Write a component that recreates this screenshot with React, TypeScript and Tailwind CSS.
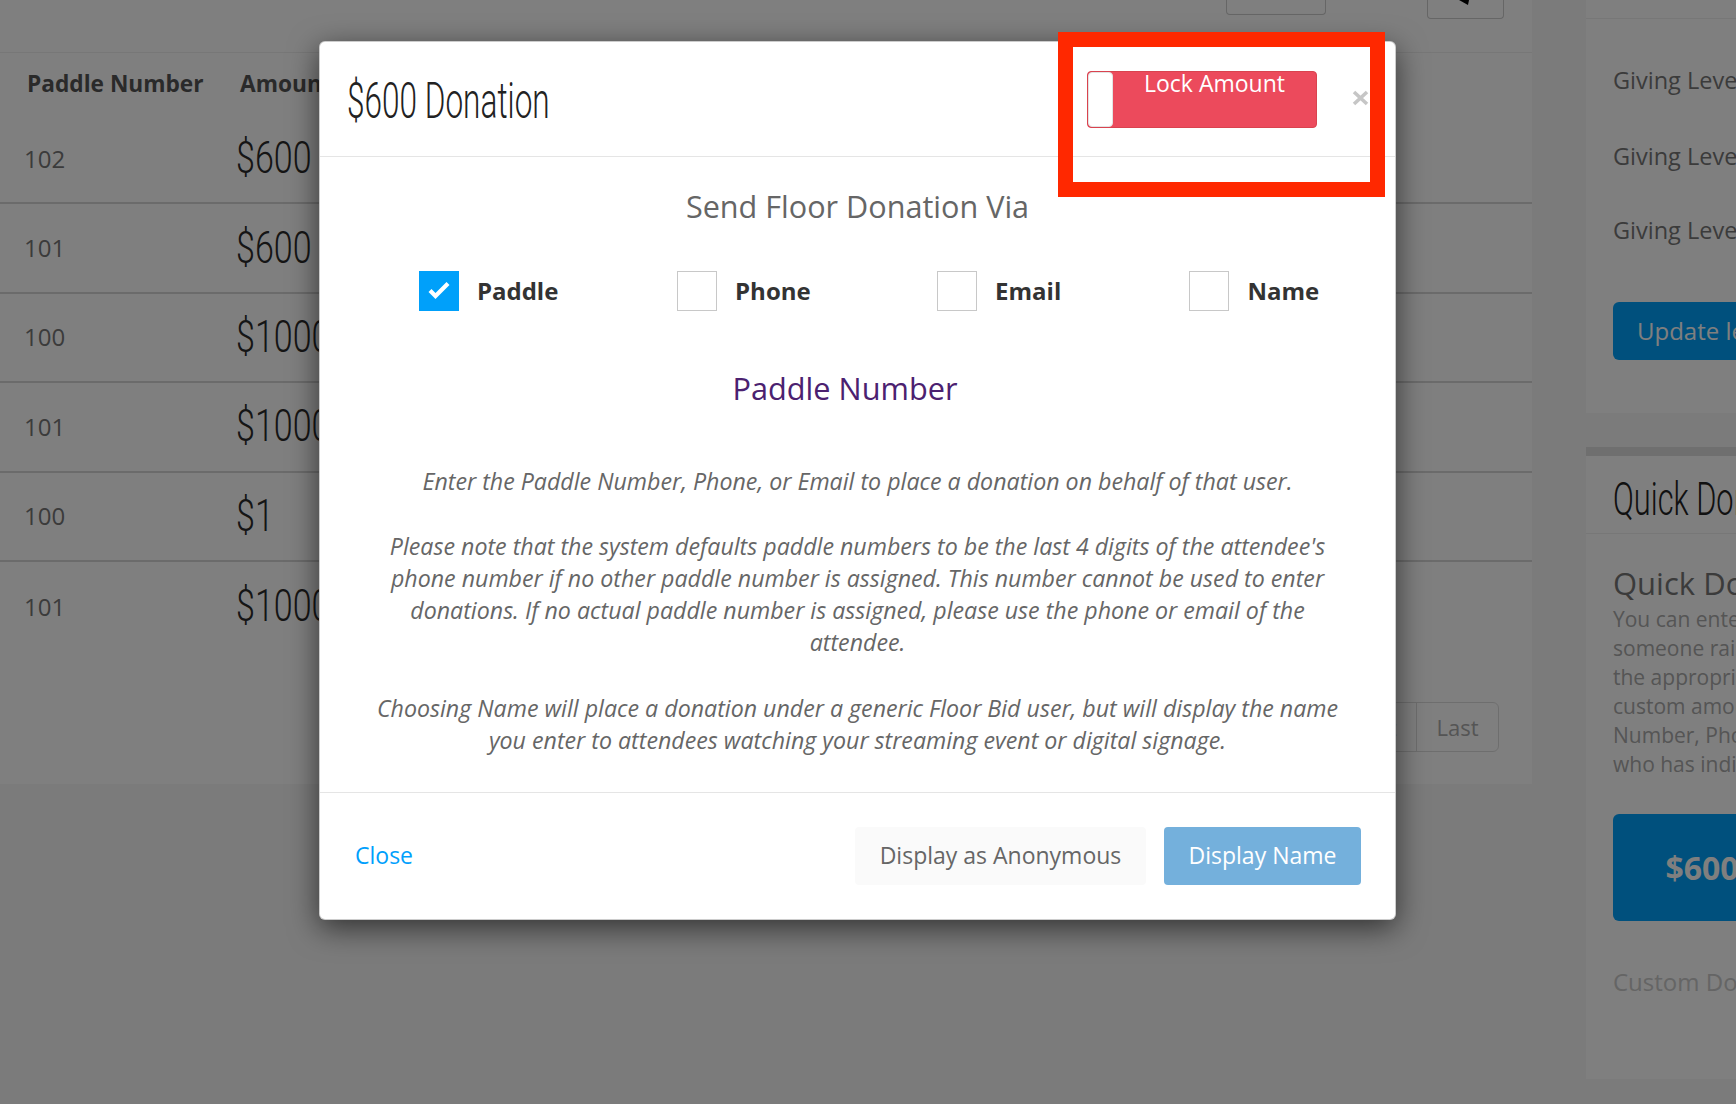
import React from "react";

const rows: [string, string][] = [
  ["102", "$600"],
  ["101", "$600"],
  ["100", "$1000"],
  ["101", "$1000"],
  ["100", "$1"],
  ["101", "$1000"],
];

const options = ["Paddle", "Phone", "Email", "Name"];

function Check() {
  return (
    <svg width="40" height="40" viewBox="0 0 40 40">
      <polyline points="11,19.5 16.5,25 29,12.5" fill="none" stroke="#ffffff" strokeWidth="4.2" />
    </svg>
  );
}

export default function App() {
  return (
    <div className="relative w-[1736px] h-[1104px] overflow-hidden bg-[#f6f6f6] font-['Open_Sans',sans-serif]">
      {/* Page underneath */}
      <div className="flex items-start">
        {/* Left panel */}
        <div className="w-[1532px] h-[784px] shrink-0 bg-white flex flex-col">
          <div className="h-[53px] shrink-0 border-b border-[#eeeeee] flex items-start">
            <div className="ml-[1226px] w-[100px] h-[15px] border border-t-0 border-[#cccccc] rounded-b-[4px]" />
            <div className="ml-[101px] w-[77px] h-[19px] border border-t-0 border-[#cccccc] rounded-b-[4px] flex justify-center">
              <svg width="12" height="6" viewBox="0 0 12 6" className="ml-[-2px]">
                <polygon points="0,0 10,0 9,5" fill="#000000" />
              </svg>
            </div>
          </div>
          <div className="h-[62px] shrink-0 flex items-center text-[22.7px] font-bold text-[#555555]">
            <div className="w-[240px] shrink-0 pl-[27px] whitespace-nowrap">Paddle Number</div>
            <div>Amount</div>
          </div>
          {rows.map((r, i) => (
            <div
              key={i}
              className={
                i < rows.length - 1
                  ? "h-[89.4px] shrink-0 border-b-2 border-[#d6d6d6] flex items-center"
                  : "h-[89.4px] shrink-0 flex items-center"
              }
            >
              <div className="w-[236px] shrink-0 pl-[24px] text-[24px] text-[#777777]">{r[0]}</div>
              <div className="inline-block origin-left scale-x-[0.83] scale-y-[1.06] font-['Roboto',sans-serif] font-light text-[41px] leading-none text-[#2a2a2a]">
                {r[1]}
              </div>
            </div>
          ))}
          <div className="mt-[51px] flex justify-end pr-[33px]">
            <div className="flex h-[50px] border border-[#dddddd] rounded-[6px] text-[22px] text-[#aaaaaa]">
              <div className="w-[87px] flex items-center justify-center">Next</div>
              <div className="w-[82px] flex items-center justify-center border-l border-[#dddddd]">Last</div>
            </div>
          </div>
        </div>

        {/* Right column */}
        <div className="ml-[54px] w-[420px] shrink-0 flex flex-col">
          <div className="h-[413px] bg-white flex flex-col">
            <div className="h-[19px] shrink-0 border-b border-[#eeeeee] pl-[27px] overflow-hidden">
              <div className="mt-[-56px] block w-max origin-left scale-x-[0.77] font-['Roboto',sans-serif] font-light text-[40px] leading-none text-[#222222] whitespace-nowrap">
                Giving Levels
              </div>
            </div>
            <div className="pl-[27px] flex flex-col text-[23.5px] leading-[30px] text-[#777777] whitespace-nowrap">
              <div className="mt-[46px]">Giving Level 1</div>
              <div className="mt-[46px]">Giving Level 2</div>
              <div className="mt-[44px]">Giving Level 3</div>
              <div className="mt-[57px] h-[58px] w-[260px] rounded-[6px] bg-[#00a0fa] text-white text-[24px] flex items-center pl-[24px]">
                Update levels
              </div>
            </div>
          </div>
          <div className="mt-[34px] h-[632px] border-t-[9px] border-[#dedede] bg-white flex flex-col">
            <div className="h-[78px] shrink-0 border-b border-[#eeeeee] pl-[27px] pt-[10px] flex items-center whitespace-nowrap">
              <div className="inline-block origin-left scale-x-[0.77] scale-y-[1.15] font-['Roboto',sans-serif] font-light text-[40px] leading-none text-[#222222]">
                Quick Donations
              </div>
            </div>
            <div className="pl-[27px] flex flex-col whitespace-nowrap">
              <div className="mt-[32px] text-[31px] leading-[34px] text-[#777777]">Quick Donations</div>
              <div className="mt-[4.5px] text-[21px] leading-[29px] text-[#aaaaaa]">
                <div>You can enter a quick donation when</div>
                <div>someone raises their paddle for</div>
                <div>the appropriate level, or enter a</div>
                <div>custom amount with the Paddle</div>
                <div>Number, Phone, or Email of anyone</div>
                <div>who has indicated a donation.</div>
              </div>
              <div className="mt-[35.5px] h-[107px] w-[178px] rounded-[6px] bg-[#00a0fa] text-white text-[32px] font-bold flex items-center justify-center">
                $600
              </div>
              <div className="mt-[45px] text-[24px] leading-[32px] text-[#cacaca]">Custom Donation</div>
            </div>
          </div>
        </div>
      </div>

      {/* Backdrop */}
      <div className="absolute inset-0 bg-black/50" />

      {/* Modal */}
      <div className="absolute left-[319px] top-[41px] w-[1077px] bg-white border border-black/20 rounded-[6px] shadow-[0_8px_30px_rgba(0,0,0,0.6)]">
        <div className="h-[115px] border-b border-[#e5e5e5] flex items-start pl-[27px] pr-[26px]">
          <div className="mt-[39px] inline-block origin-left scale-x-[0.77] scale-y-[1.2] font-['Roboto',sans-serif] font-light text-[41px] leading-none text-[#222222] whitespace-nowrap">
            $600 Donation
          </div>
          <div className="ml-auto mt-[29px] w-[230px] h-[57px] shrink-0 rounded-[4px] bg-[#ec4a5c] border border-[#d9434f] flex">
            <div className="w-[25px] h-full bg-white rounded-[4px] border border-[#e3e3e3]" />
            <div className="flex-1 text-center text-white text-[23px] leading-none">Lock Amount</div>
          </div>
          <div className="ml-[35px] mt-[48px] shrink-0">
            <svg width="17" height="16" viewBox="0 0 17 16">
              <path d="M2 2 L15 14 M15 2 L2 14" stroke="#c6c6c6" strokeWidth="3.6" strokeLinecap="butt" />
            </svg>
          </div>
        </div>

        <div className="pt-[29px] pb-[36px]">
          <div className="text-center text-[30.6px] leading-[40px] text-[#666666]">Send Floor Donation Via</div>
          <div className="mt-[44.5px] ml-[41px] w-[1021px] h-[40px] grid grid-cols-4">
            {options.map((o, i) => (
              <div key={o} className="flex items-center justify-center gap-[18px]">
                {i === 0 ? (
                  <div className="w-[40px] h-[40px] bg-[#00a0fa]">
                    <Check />
                  </div>
                ) : (
                  <div className="w-[40px] h-[40px] bg-white border border-[#c8c8c8]" />
                )}
                <div className="text-[24px] font-bold text-[#333333]">{o}</div>
              </div>
            ))}
          </div>
          <div className="mt-[57px] pr-[25px] text-center text-[30.7px] leading-[40px] text-[#4b2170]">Paddle Number</div>
          <div className="mt-[57px] mx-auto w-[985px] text-center italic text-[23.2px] leading-[32px] text-[#666666]">
            <p>Enter the Paddle Number, Phone, or Email to place a donation on behalf of that user.</p>
            <p className="mt-[33.5px]">
              Please note that the system defaults paddle numbers to be the last 4 digits of the attendee's phone number if no other paddle number is assigned. This number cannot be used to enter donations. If no actual paddle number is assigned, please use the phone or email of the attendee.
            </p>
            <p className="mt-[33.5px]">
              Choosing Name will place a donation under a generic Floor Bid user, but will display the name you enter to attendees watching your streaming event or digital signage.
            </p>
          </div>
        </div>

        <div className="h-[127px] border-t border-[#e5e5e5] flex items-center pl-[35px] pr-[34px]">
          <div className="text-[23px] text-[#009ffc]">Close</div>
          <div className="ml-auto flex items-center">
            <div className="h-[58px] w-[291px] rounded-[4px] bg-[#fafafa] text-[23px] text-[#666666] flex items-center justify-center">
              Display as Anonymous
            </div>
            <div className="ml-[18px] h-[58px] w-[197px] rounded-[4px] bg-[#74b0dc] text-[23px] text-white flex items-center justify-center">
              Display Name
            </div>
          </div>
        </div>
      </div>

      {/* Annotation */}
      <div className="absolute left-[1058px] top-[32px] w-[327px] h-[165px] border-[15px] border-[#ff2800]" />
    </div>
  );
}
